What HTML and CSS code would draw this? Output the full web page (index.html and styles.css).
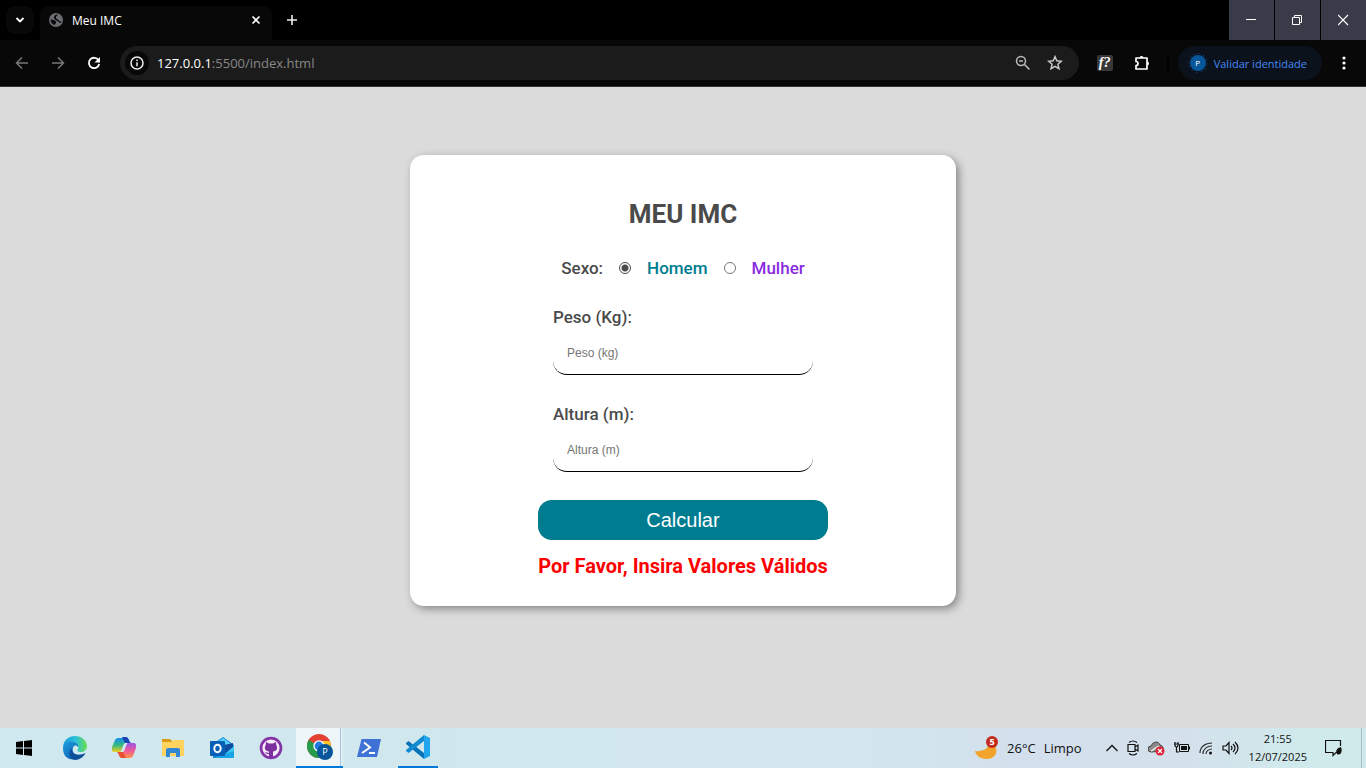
FILE: index.html
```html
<!DOCTYPE html>
<html lang="pt-BR">
<head>
<meta charset="utf-8">
<title>Meu IMC</title>
<link rel="stylesheet" href="styles.css">
</head>
<body>
<header class="browser">
  <div class="tabstrip">
    <button class="tab-search" aria-label="Pesquisar guias"><svg width="10" height="10" viewBox="0 0 10 10"><path d="M1.500 3l3.500 3.500L8.500 3" fill="none" stroke="#fff" stroke-width="1.800"/></svg></button>
    <div class="tab">
      <svg width="14" height="14" viewBox="0 0 14 14"><circle cx="7" cy="7" r="7" fill="#6b6d73"/><path d="M1.500 6.500L5 7l2 1.500v1.500L5.500 12Q2 11 1.500 6.500zM7.500 1.500l1.500.3L7 3.500v2l2 1 1 1.500 2.500.5-.3 1Q10 10 9 8.500L6 6.500 5 5q0-3 2.500-3.500z" fill="#0a0a0a"/></svg>
      <span class="tab-title">Meu IMC</span>
      <button class="icon-button" aria-label="Fechar guia"><svg width="10" height="10" viewBox="0 0 10 10"><path d="M1.500 1.500l7 7M8.500 1.500l-7 7" stroke="#fff" stroke-width="1.600"/></svg></button>
    </div>
    <button class="icon-button new-tab" aria-label="Nova guia"><svg width="12" height="12" viewBox="0 0 12 12"><path d="M6 1v10M1 6h10" stroke="#eee" stroke-width="1.600"/></svg></button>
    <div class="window-controls">
      <button class="window-button" aria-label="Minimizar"><svg width="12" height="12" viewBox="0 0 12 12"><path d="M0 5.500h10" stroke="#fff"/></svg></button>
      <button class="window-button" aria-label="Restaurar"><svg width="12" height="12" viewBox="0 0 12 12"><path d="M.5 3.500h7v7h-7zM2.500 3.500v-2h7v7h-2" fill="none" stroke="#fff"/></svg></button>
      <button class="window-button" aria-label="Fechar"><svg width="12" height="12" viewBox="0 0 12 12"><path d="M0 1l10 10M10 1L0 11" stroke="#fff" stroke-width="1.200"/></svg></button>
    </div>
  </div>
  <div class="toolbar">
    <nav class="history">
      <button class="icon-button" aria-label="Voltar"><svg width="14" height="14" viewBox="0 0 14 14"><path d="M13 7H2M7 1.500L1.500 7 7 12.500" fill="none" stroke="#777" stroke-width="1.500"/></svg></button>
      <button class="icon-button" aria-label="Avançar"><svg width="14" height="14" viewBox="0 0 14 14"><path d="M1 7h11M7 1.500L12.500 7 7 12.500" fill="none" stroke="#777" stroke-width="1.500"/></svg></button>
      <button class="icon-button" aria-label="Recarregar"><svg width="14" height="14" viewBox="0 0 14 14"><path d="M11.500 4.200A5.200 5.200 0 1 0 12.200 8" fill="none" stroke="#fff" stroke-width="1.800"/><path d="M13 1v5.500H7.500z" fill="#fff"/></svg></button>
    </nav>
    <div class="address">
      <button class="site-info" aria-label="Informações do site"><svg width="14" height="14" viewBox="0 0 14 14"><circle cx="7" cy="7" r="6" fill="none" stroke="#eee" stroke-width="1.500"/><path d="M7 6.200v4M7 3.500v1.500" stroke="#eee" stroke-width="1.500"/></svg></button>
      <span class="url"><b>127.0.0.1</b>:5500/index.html</span>
      <button class="icon-button" aria-label="Zoom"><svg width="16" height="16" viewBox="0 0 16 16"><circle cx="6" cy="6" r="4.500" fill="none" stroke="#bbb" stroke-width="1.500"/><path d="M4 6h4M9.500 9.500l5 5" stroke="#bbb" stroke-width="1.500"/></svg></button>
      <button class="icon-button" aria-label="Favoritar"><svg width="16" height="16" viewBox="0 0 16 16"><path d="M8 1.600l1.800 4.200 4.600.4-3.500 3 1.100 4.500L8 11.300l-4 2.400 1.100-4.500-3.500-3 4.600-.4z" fill="none" stroke="#ccc" stroke-width="1.400"/></svg></button>
    </div>
    <div class="extensions">
      <button class="fonts-extension" aria-label="Identificar fonte"><i>f?</i></button>
      <button class="icon-button" aria-label="Extensões"><svg width="18" height="18" viewBox="0 0 18 18"><path d="M3 4h11v11H3v-3.500a2 2 0 0 0 0-4z" fill="none" stroke="#fff" stroke-width="1.700" stroke-linejoin="round"/><path d="M6.500 4a2 2 0 0 1 4 0zM14 7.500a2 2 0 0 1 0 4z" fill="#fff"/></svg></button>
    </div>
    <button class="profile"><span class="avatar">P</span>Validar identidade</button>
    <button class="icon-button" aria-label="Menu"><svg width="4" height="14" viewBox="0 0 4 14" fill="#fff"><circle cx="2" cy="2" r="1.600"/><circle cx="2" cy="7" r="1.600"/><circle cx="2" cy="12" r="1.600"/></svg></button>
  </div>
</header>

<main class="page">
  <form class="card">
    <h1 class="title">MEU IMC</h1>
    <div class="sex" role="radiogroup" aria-labelledby="sex-label">
      <span id="sex-label">Sexo:</span>
      <input class="radio" type="radio" name="sexo" id="homem" checked>
      <label class="male" for="homem">Homem</label>
      <input class="radio" type="radio" name="sexo" id="mulher">
      <label class="female" for="mulher">Mulher</label>
    </div>
    <div class="field">
      <label for="peso">Peso (Kg):</label>
      <input class="text-input" id="peso" type="text" placeholder="Peso (kg)">
    </div>
    <div class="field">
      <label for="altura">Altura (m):</label>
      <input class="text-input" id="altura" type="text" placeholder="Altura (m)">
    </div>
    <div class="actions">
      <button class="submit" type="button">Calcular</button>
      <p class="error">Por Favor, Insira Valores Válidos</p>
    </div>
  </form>
</main>

<footer class="taskbar">
  <div class="apps">
    <button class="app start" aria-label="Iniciar"><svg width="16" height="16" viewBox="0 0 16 16"><path d="M0 2l7-1v6.500H0zM8 .9L16 0v7.500H8zM0 8.500h7V15l-7-1zM8 8.500h8V16l-8-.9z"/></svg></button>
    <button class="app" aria-label="Edge"><svg width="24" height="24" viewBox="0 0 24 24"><defs><linearGradient id="edge-top"><stop offset="0" stop-color="#189bd8"/><stop offset=".55" stop-color="#2cc0d8"/><stop offset="1" stop-color="#6be04a"/></linearGradient><linearGradient id="edge-side" x2="1" y2="1"><stop stop-color="#1b9de2"/><stop offset="1" stop-color="#0a55a4"/></linearGradient></defs><path d="M0 12C0 4 6 0 12 0c7 0 12 5 12 10 0 4-3 6-6 6-4 0-4-1.500-3-3 1-2-.5-5-4-5-5 0-10 2-11 4z" fill="url(#edge-top)"/><path d="M0 12c1-5 6-7 10-6 4 .8 5.500 3 5 5-1-2-4-2.500-5 .5C8.500 16 12 21 18 20.500 14 25 0 26 0 12z" fill="url(#edge-side)"/><path d="M9.500 12c-2 5 4 9 13 5-2 4-6 7-10.500 7C5 23 5 15 9.500 12z" fill="#0c509c"/></svg></button>
    <button class="app" aria-label="Copilot"><svg width="24" height="22" viewBox="0 0 24 22"><defs><linearGradient id="cop-a" x2="0" y2="1"><stop stop-color="#168cf0"/><stop offset=".5" stop-color="#32b982"/><stop offset="1" stop-color="#f2ce20"/></linearGradient><linearGradient id="cop-b" x2="0" y2="1"><stop stop-color="#9a55e8"/><stop offset=".5" stop-color="#ed5b9c"/><stop offset="1" stop-color="#ff9245"/></linearGradient></defs><path d="M6 1h8c3 0 3 5 5 5h-6c-2 0-3 9-5 9H3c-3 0-4-2-3-5L3 3q1-2 3-2z" fill="url(#cop-a)"/><path d="M10 0h4c3 0 3 5 5 6h-6z" fill="#1747b5"/><path d="M18 21h-8c-3 0-3-5-5-6h6c2 0 3-9 5-9h5c3 0 4 2 3 5l-3 8q-1 2-3 2z" fill="url(#cop-b)"/><path d="M5 15h6l3 6h-4c-3 0-3-5-5-6z" fill="#e94f35"/></svg></button>
    <button class="app" aria-label="Explorador de arquivos"><svg width="22" height="20" viewBox="0 0 22 20"><path d="M0 1h8l2 2h11v15H0z" fill="#d99a16"/><path d="M0 4h9l2-2h11v16H0z" fill="#ffd35d"/><path d="M4 19v-7q0-2 2-2h10q2 0 2 2v7h-4v-4H8v4z" fill="#3187d3"/></svg></button>
    <button class="app" aria-label="Outlook"><svg width="24" height="24" viewBox="0 0 24 24"><path d="M3 8L13 1l11 8v13H3z" fill="#1385d5"/><path d="M6 7l7-5 8 6-8 6z" fill="#5ad0fb"/><path d="M12 22L24 9v11q0 2-2 2z" fill="#3bc5f1"/><path d="M4 22l20-7v7z" fill="#1ba4e7"/><path d="M14 9l9-2v4l-8 6z" fill="#124c9d"/><rect y="5" width="15" height="15" rx="1" fill="#0860b6"/><ellipse cx="7.500" cy="12.500" rx="3.200" ry="3.700" fill="none" stroke="#fff" stroke-width="2"/></svg></button>
    <button class="app" aria-label="GitHub Desktop"><svg width="24" height="24" viewBox="0 0 24 24"><circle cx="12" cy="12" r="11.300" fill="#8434a8"/><circle cx="12" cy="12" r="8.600" fill="#f7ebfa"/><path d="M7 6l3 1.500h4L17 6l.3 3c2 4 .2 6-3.300 6.500V21h-4v-3c-2 .4-3-.4-4-2 2 .3 2 1 4 .7v-1.200C6.500 15 4.700 13 6.700 9z" fill="#7c30a0"/></svg></button>
    <button class="app active" aria-label="Chrome"><svg width="26" height="26" viewBox="0 0 26 26"><circle cx="12" cy="12" r="12" fill="#e34133"/><path d="M12 12L1.600 6A12 12 0 0 0 12 24l5-9z" fill="#269b4a"/><path d="M12 7h10.800A12 12 0 0 1 12 24l5-9z" fill="#fbc720"/><circle cx="12" cy="12" r="5.700" fill="#fff"/><circle cx="12" cy="12" r="4.400" fill="#267be2"/><circle cx="18" cy="18" r="8" fill="#07569a"/><text class="badge-letter" x="18" y="21" text-anchor="middle">P</text></svg></button>
    <button class="app" aria-label="PowerShell"><svg width="24" height="18" viewBox="0 0 24 18"><path d="M4.500 0H24l-4 18H0z" fill="#3f72d4"/><path d="M7 3.500l6 5L5 14M12 14h6" fill="none" stroke="#fff" stroke-width="2"/></svg></button>
    <button class="app running" aria-label="Visual Studio Code"><svg width="24" height="24" viewBox="0 0 24 24"><path d="M18 0l6 3v18l-6 3z" fill="#22a5ef"/><path d="M0 8l2.500-2L18 18v6L0 9z" fill="#0873b8"/><path d="M0 16l2.500 2L18 6V0L0 15z" fill="#138bd1"/></svg></button>
  </div>
  <div class="tray">
    <button class="weather"><svg width="24" height="24" viewBox="0 0 24 24"><path d="M0 15c7 1 13-2 16-9 9 6 6 17-4 17C6 23 1 20 0 15z" fill="#f2a32b"/><circle cx="17" cy="6" r="6" fill="#c42b1c"/><text class="weather-count" x="17" y="9" text-anchor="middle">5</text></svg><span>26°C</span><span>Limpo</span></button>
    <div class="status">
      <svg width="12" height="12" viewBox="0 0 12 12"><path d="M.5 9L6 3.500 11.500 9" fill="none" stroke="#111" stroke-width="1.300"/></svg>
      <svg width="12" height="16" viewBox="0 0 12 16"><path d="M2 2.500q4-3 8 0M2 13.500q4 3 8 0M1 4.500h7v7H1zM8 7l3-2v6L8 9" fill="none" stroke="#111" stroke-width="1.200"/></svg>
      <svg width="17" height="16" viewBox="0 0 17 16"><path d="M3 12a3 3 0 0 1 0-6c2-5 8-5 9-1q4 1 3 6z" fill="#8a8a8a" stroke="#444"/><path d="M3 11l8-5" stroke="#ddd" stroke-width="2"/><circle cx="12" cy="11" r="4.500" fill="#df2035"/><path d="M10 9l4 4M14 9l-4 4" stroke="#fff" stroke-width="1.200"/></svg>
      <svg width="16" height="14" viewBox="0 0 16 14"><path d="M1 1v3q0 2 1.500 2T4 4V1M0 3h5M2.500 6v5H5" fill="none" stroke="#111" stroke-width="1.200"/><path d="M5.500 3.500h9v7h-9z" fill="none" stroke="#111"/><path d="M7 5h6v4H7zM15 5.500h1v3h-1z" fill="#111"/></svg>
      <svg width="14" height="14" viewBox="0 0 14 14"><path d="M1 12C1 6 6 2 13 2M4 13C4 8 8 5 13 5M7 13c0-3 3-5 6-5" fill="none" stroke="#333" stroke-width="1.200"/><circle cx="11.500" cy="12" r="1.500" fill="#111"/></svg>
      <svg width="17" height="14" viewBox="0 0 17 14"><path d="M1 5h3l3-3.500v11L4 9H1zM9 5q2 2 0 4M11 3q4 4 0 8M13 1q6 6 0 12" fill="none" stroke="#111" stroke-width="1.200"/></svg>
    </div>
    <time class="clock" datetime="2025-07-12T21:55"><span>21:55</span><span>12/07/2025</span></time>
    <button class="notifications" aria-label="Notificações"><svg width="18" height="18" viewBox="0 0 18 18"><path d="M14 13.500h-3l-3 3v-3H.5v-12h15V7" fill="none" stroke="#111" stroke-width="1.200"/><path d="M16 8c-4 1-6 4-4 7 3 2 6-2 4-7z" fill="#111"/></svg></button>
  </div>
</footer>
</body>
</html>
```

FILE: styles.css
```css
* { box-sizing: border-box; }

body {
  margin: 0;
  min-height: 100vh;
  display: flex;
  flex-direction: column;
  font-family: "Open Sans", "Noto Sans", sans-serif;
}

button {
  margin: 0;
  padding: 0;
  border: 0;
  background: none;
  color: inherit;
  font: inherit;
}

svg { display: block; flex: none; }

/* Browser frame */
.browser {
  background: #000;
  color: #fff;
  border-bottom: 1px solid #333;
}

.tabstrip {
  height: 40px;
  display: flex;
  padding-left: 6px;
}

.tab-search {
  width: 28px;
  height: 28px;
  margin: 6px 6px 0 0;
  border-radius: 9px;
  background: #080808;
  display: grid;
  place-items: center;
}

.tab {
  width: 232px;
  margin-top: 6px;
  padding: 0 11px 6px 9px;
  border-radius: 9px 9px 0 0;
  background: #080808;
  display: flex;
  align-items: center;
  gap: 9px;
  font-size: 12px;
}

.tab-title { flex: 1; }

.icon-button {
  display: grid;
  place-items: center;
}

.new-tab { width: 40px; }

.window-controls {
  margin-left: auto;
  display: flex;
  gap: 1px;
}

.window-button {
  width: 45px;
  background: #393b49;
  display: grid;
  place-items: center;
}

.toolbar {
  height: 46px;
  padding: 0 20px 0 15px;
  background: #080808;
  display: flex;
  align-items: center;
}

.history {
  display: flex;
  gap: 22px;
  margin-right: 19px;
}

.address {
  flex: 1;
  height: 34px;
  padding: 0 16px 0 5px;
  border-radius: 17px;
  background: #1b1b1b;
  display: flex;
  align-items: center;
  gap: 16px;
}

.site-info {
  width: 24px;
  height: 24px;
  margin-right: -8px;
  border-radius: 50%;
  background: #080808;
  display: grid;
  place-items: center;
}

.url {
  flex: 1;
  color: #888;
  font-size: 13px;
}

.url b { color: #fff; font-weight: 400; }

.extensions {
  display: flex;
  align-items: center;
  gap: 20px;
  margin: 0 9px 0 18px;
  padding-right: 16px;
  border-right: 2px solid #000;
}

.fonts-extension {
  width: 16px;
  height: 16px;
  border-radius: 2px;
  background: #383838;
  font: bold 14px/16px "Liberation Serif", serif;
}

.profile {
  height: 34px;
  margin-right: 20px;
  padding: 0 15px 0 12px;
  border-radius: 17px;
  background: #0c121b;
  color: #4389f5;
  display: flex;
  align-items: center;
  gap: 8px;
  font-size: 11px;
}

.avatar {
  width: 16px;
  height: 16px;
  border-radius: 50%;
  background: #07569a;
  outline: 1px dashed #0c3058;
  outline-offset: 1px;
  color: #fff;
  font-size: 8px;
  line-height: 16px;
  text-align: center;
}

/* Calculator */
.page {
  flex: 1;
  padding: 68px 0;
  background: #dbdbdb;
  color: #4a4a4a;
  font-family: Roboto, "Liberation Sans", Arial, sans-serif;
}

.card {
  width: 40%;
  min-width: 320px;
  margin: 0 auto;
  padding: 43px 0 28px;
  border-radius: 14px;
  background: #fff;
  box-shadow: 3px 3px 8px #888;
  display: flex;
  flex-direction: column;
  align-items: center;
  gap: 28px;
  font-size: 17px;
  font-weight: 500;
}

.title {
  margin: 0;
  font-size: 26px;
  font-weight: 700;
  line-height: 32px;
}

.sex {
  display: flex;
  align-items: center;
  gap: 16px;
  line-height: 20px;
}

.radio {
  appearance: none;
  width: 12px;
  height: 12px;
  margin: 0;
  border: 1px solid #767676;
  border-radius: 50%;
}

.radio:checked {
  border-color: #4a4a4a;
  background: radial-gradient(circle, #4a4a4a 3px, #fff 4px);
}

.male { color: #007c91; }
.female { color: #8a2be2; }

.field {
  width: 260px;
  display: flex;
  flex-direction: column;
  gap: 4px;
  line-height: 22px;
}

.text-input {
  height: 43px;
  padding: 0 14px;
  border: 0;
  border-bottom: 1px solid #000;
  border-radius: 14px;
  background: #fff;
  font: 12px "Liberation Sans", Arial, sans-serif;
}

.text-input::placeholder { color: #757575; }

.actions {
  width: 290px;
  display: flex;
  flex-direction: column;
  gap: 14px;
}

.submit {
  height: 40px;
  border-radius: 14px;
  background: #007c91;
  color: #fff;
  font: 20px "Liberation Sans", Arial, sans-serif;
}

.error {
  margin: 0;
  color: #f00;
  font-size: 20px;
  font-weight: 700;
  line-height: 24px;
  text-align: center;
}

/* Taskbar */
.taskbar {
  height: 40px;
  background: linear-gradient(90deg, #d0e8ef 0%, #d2e6ed 65%, #d3dfec 75%, #d4e0eb 86%, #d0eaec 95%);
  color: #111;
  display: flex;
  justify-content: space-between;
}

.apps, .tray { display: flex; }

.app {
  width: 49px;
  display: grid;
  place-items: center;
}

.start { width: 48px; margin-right: 2px; }

.active {
  background: linear-gradient(90deg, #edf5f9 44px, #a5c5da 44px, #a5c5da 45px, #e1eff5 45px);
  border-bottom: 2px solid #0078d7;
  background-clip: padding-box;
  width: 47px;
  margin: 0 1px;
}

.running {
  width: 40px;
  margin: 0 5px;
  border-bottom: 2px solid #0078d7;
}

.badge-letter { fill: #fff; font-size: 9px; }
.weather-count { fill: #fff; font-size: 9px; font-weight: 700; }

.tray {
  align-items: center;
  padding-right: 4px;
}

.weather {
  display: flex;
  align-items: center;
  gap: 8px;
  margin-right: 24px;
  font-size: 13px;
}

.status {
  display: flex;
  align-items: center;
  gap: 9px;
}

.clock {
  margin-left: 10px;
  display: flex;
  flex-direction: column;
  align-items: center;
  font-size: 11px;
  line-height: 18px;
}

.notifications {
  height: 40px;
  padding: 0 18px;
  border-right: 1px solid #a7bec4;
}
```
